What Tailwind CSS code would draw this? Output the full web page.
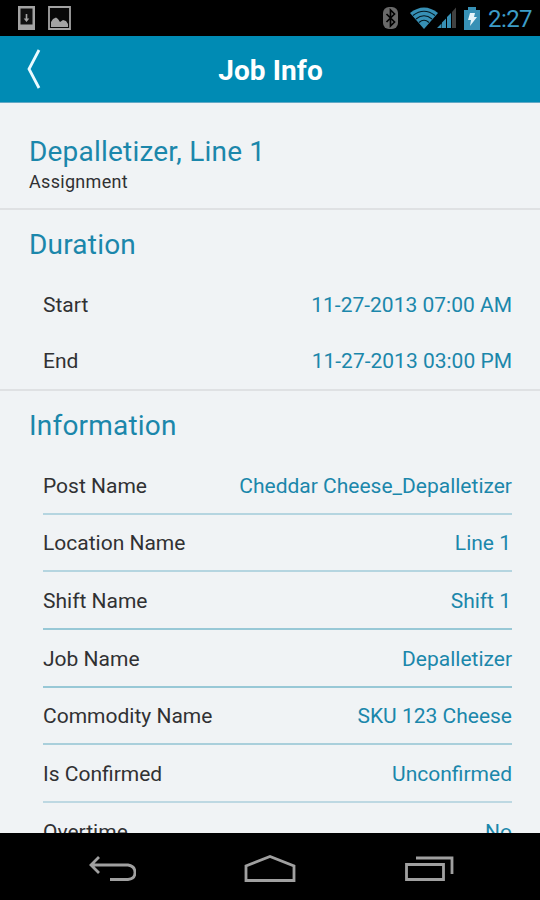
<!DOCTYPE html>
<html lang="en">

<head>
    <meta charset="UTF-8">
    <meta name="viewport" content="width=device-width, initial-scale=1.0">
    <script src="https://cdn.jsdelivr.net/npm/@tailwindcss/browser@4"></script>
    <title>Job Info</title>
</head>

<body class="bg-black">
    <div class="w-[540px] h-[900px] flex flex-col overflow-hidden bg-[#f0f3f5] font-['Roboto','Liberation_Sans',sans-serif] text-[#303133]">

        <!-- status bar -->
        <div class="h-9 shrink-0 bg-black flex items-center justify-between pl-[18px] pr-2">
            <div class="flex items-center gap-[13px]">
                <svg width="17" height="24" viewBox="0 0 17 24">
                    <path d="M0 0h17v24H0z" fill="#a3a3a3" />
                    <path d="M2.500 2.500h12V18.500h-12z" fill="#101010" />
                    <path d="M7.700 8h1.600v4.500h2L8.500 16 5.700 12.500h2z" fill="#a3a3a3" />
                </svg>
                <svg width="23" height="24" viewBox="0 0 23 24">
                    <path d="M1 1h21v22H1z" fill="#080808" stroke="#a3a3a3" stroke-width="1.800" />
                    <path d="M3 21v-5l2-3 3-1.500 2 1.500 2 3 3-2 3 1 2 3v3z" fill="#a3a3a3" />
                </svg>
            </div>
            <div class="flex items-center">
                <svg class="mr-3" width="15" height="22" viewBox="0 0 15 22">
                    <rect width="15" height="22" rx="6" fill="#696969" />
                    <path d="M3.500 7l8 8-4 4V3l4 4-8 8" fill="none" stroke="#000" stroke-width="1.700" />
                </svg>
                <svg width="48" height="24" viewBox="0 0 48 24">
                    <path d="M0 7Q14 -4 28 7L14 23z" fill="#3790b5" />
                    <g fill="none" stroke="#041820" stroke-width="1.100">
                        <path d="M3 9.500q11-8.500 22 0" />
                        <path d="M6 13q8-6.500 16 0" />
                        <path d="M9 16.500q5-4.500 10 0" />
                    </g>
                    <path d="M27 22l4.500-4.500V22zM32 22v-5.500l4-4V22zM37 22V11l4-4v15z" fill="#3790b5" />
                    <path d="M42 22V6L46 1.500V22z" fill="#414141" />
                </svg>
                <svg class="ml-[6px] mr-2" width="16" height="23" viewBox="0 0 16 23">
                    <path d="M4 0h8v3h4v20H0V3h4z" fill="#3790b5" />
                    <path d="M6 6h5l-1 4h3l-7 9 1-6H4z" fill="#e5f4fa" />
                </svg>
                <span class="text-[24px] leading-9 pt-px text-[#3c9dc8] tracking-[-0.6px]">2:27</span>
            </div>
        </div>

        <!-- title bar -->
        <div class="h-[67px] shrink-0 bg-[#008bb4] border-b border-[#62a9c6] grid grid-cols-[1fr_auto_1fr] items-center">
            <svg class="ml-[26px]" width="16" height="42" viewBox="0 0 16 42">
                <path d="M13 2L3 21l10 19" fill="none" stroke="#eafaff" stroke-width="2.800" />
            </svg>
            <h1 class="text-[28px] leading-none font-bold text-white pt-1 pl-px tracking-[0.1px]">Job Info</h1>
        </div>

        <!-- details -->
        <div class="flex-1 min-h-0 overflow-hidden">
            <section class="h-[107px] pt-[32px] pl-[29px] border-b-2 border-[#dfe1e3]">
                <h2 class="text-[28px] leading-[34px] tracking-[0.2px] text-[#1b87ab]">Depalletizer, Line 1</h2>
                <p class="text-[18px] leading-[26px] tracking-[0.3px]">Assignment</p>
            </section>

            <section class="h-[181px] pt-[18px] pl-[29px] pr-7 border-b-2 border-[#dfe1e3]">
                <h2 class="text-[28px] leading-[34px] tracking-[0.2px] text-[#1b87ab]">Duration</h2>
                <dl class="pl-[14px] pt-4 text-[21px]">
                    <div class="h-14 flex items-center justify-between">
                        <dt>Start</dt>
                        <dd class="text-[#1b87ab]">11-27-2013 07:00 AM</dd>
                    </div>
                    <div class="h-14 flex items-center justify-between">
                        <dt>End</dt>
                        <dd class="text-[#1b87ab]">11-27-2013 03:00 PM</dd>
                    </div>
                </dl>
            </section>

            <section class="pt-[18px] pl-[29px] pr-7">
                <h2 class="text-[28px] leading-[34px] tracking-[0.2px] text-[#1b87ab]">Information</h2>
                <dl class="pl-[14px] pt-3.5 text-[21px]">
                    <div class="h-[57.7px] pt-[3px] flex items-center justify-between border-b-2 border-[#b5d5e0]">
                        <dt>Post Name</dt>
                        <dd class="text-[#1b87ab]">Cheddar Cheese_Depalletizer</dd>
                    </div>
                    <div class="h-[57.7px] pt-[3px] flex items-center justify-between border-b-2 border-[#b5d5e0]">
                        <dt>Location Name</dt>
                        <dd class="pr-px text-[#1b87ab]">Line 1</dd>
                    </div>
                    <div class="h-[57.7px] pt-[3px] flex items-center justify-between border-b-2 border-[#98c8d6]">
                        <dt>Shift Name</dt>
                        <dd class="pr-px text-[#1b87ab]">Shift 1</dd>
                    </div>
                    <div class="h-[57.7px] pt-[3px] flex items-center justify-between border-b-2 border-[#98c8d6]">
                        <dt>Job Name</dt>
                        <dd class="text-[#1b87ab]">Depalletizer</dd>
                    </div>
                    <div class="h-[57.7px] pt-[3px] flex items-center justify-between border-b-2 border-[#a9cfdb]">
                        <dt>Commodity Name</dt>
                        <dd class="text-[#1b87ab]">SKU 123 Cheese</dd>
                    </div>
                    <div class="h-[57.7px] pt-[3px] flex items-center justify-between border-b-2 border-[#bdd8e2]">
                        <dt>Is Confirmed</dt>
                        <dd class="text-[#1b87ab]">Unconfirmed</dd>
                    </div>
                    <div class="h-[57.7px] pt-px flex items-center justify-between">
                        <dt>Overtime</dt>
                        <dd class="text-[#1b87ab]">No</dd>
                    </div>
                </dl>
            </section>
        </div>

        <!-- navigation bar -->
        <div class="h-[67px] shrink-0 bg-black flex items-center justify-between pl-[88px] pr-[86px] pt-[5px]">
            <svg width="48" height="28" viewBox="0 0 48 28" fill="none" stroke="#a0a0a0" stroke-width="2.800">
                <path d="M11 2L3 10l8 8M3 10h37q7 1 7 7.500t-7 7H22" />
            </svg>
            <svg class="mr-px" width="52" height="30" viewBox="0 0 52 30" fill="none" stroke="#a0a0a0" stroke-width="2.800">
                <path d="M2 26.500V12L26 2.500l24 9.500v14.500z" />
            </svg>
            <svg width="49" height="26" viewBox="0 0 49 26" fill="none" stroke="#a0a0a0" stroke-width="2.800">
                <path d="M1.500 8.500h37v15h-37zM11 2h36v16" />
            </svg>
        </div>
    </div>
</body>

</html>
